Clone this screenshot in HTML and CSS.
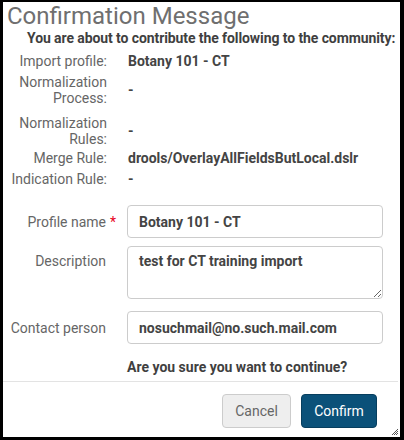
FILE: index.html
```html
<!DOCTYPE html>
<html>
<head>
<meta charset="utf-8">
<link rel="stylesheet" href="styles.css">
</head>
<body>
<div class="dialog">
  <h1 class="title">Confirmation Message</h1>
  <p class="intro">You are about to contribute the following to the community:</p>
  <div class="summary">
    <div class="row r1"><span class="lbl">Import profile:</span><span class="val">Botany 101 - CT</span></div>
    <div class="row r2"><span class="lbl">Normalization<br>Process:</span><span class="val">-</span></div>
    <div class="row r3"><span class="lbl">Normalization<br>Rules:</span><span class="val">-</span></div>
    <div class="row r4"><span class="lbl">Merge Rule:</span><span class="val">drools/OverlayAllFieldsButLocal.dslr</span></div>
    <div class="row r5"><span class="lbl">Indication Rule:</span><span class="val">-</span></div>
  </div>
  <div class="form">
    <div class="field f1">
      <label class="flabel">Profile name<span class="req">*</span></label>
      <input class="inp" type="text" value="Botany 101 - CT">
    </div>
    <div class="field f2">
      <label class="flabel top">Description</label>
      <textarea class="inp ta">test for CT training import</textarea>
    </div>
    <div class="field f3">
      <label class="flabel">Contact person</label>
      <input class="inp" type="text" value="nosuchmail@no.such.mail.com">
    </div>
  </div>
  <p class="question">Are you sure you want to continue?</p>
  <div class="footer">
    <button class="btn cancel">Cancel</button>
    <button class="btn primary">Confirm</button>
  </div>
  <svg class="grip" width="7" height="7" viewBox="0 0 7 7">
    <path d="M7 1 L1 7 M7 3 L3 7 M7 5 L5 7" stroke="#555" stroke-width="1" fill="none"/>
  </svg>
</div>
</body>
</html>
```

FILE: styles.css
```css
html, body {
  margin: 0;
  padding: 0;
  background: #000;
}
body {
  width: 404px;
  height: 440px;
  overflow: hidden;
  font-family: Roboto, "Liberation Sans", sans-serif;
}
.dialog {
  position: relative;
  width: 397px;
  height: 435px;
  margin: 2px 0 0 3px;
  background: #fff;
  display: flex;
  flex-direction: column;
}
.title {
  margin: 0;
  padding-left: 4px;
  font-size: 24px;
  line-height: 28px;
  font-weight: 400;
  color: #6f6f6f;
}
.intro {
  margin: 0;
  padding-left: 24px;
  font-size: 14px;
  line-height: 16px;
  font-weight: 700;
  letter-spacing: -0.09px;
  color: #3f3f3f;
  white-space: nowrap;
}
.summary {
  display: flex;
  flex-direction: column;
  margin-top: 7px;
}
.row {
  display: grid;
  grid-template-columns: 104px 1fr;
  column-gap: 21px;
  align-items: center;
  font-size: 14px;
  line-height: 16px;
}
.r2 { margin-top: 5px; }
.r3 { margin-top: 9px; }
.r4 { margin-top: 3px; }
.r5 { margin-top: 5px; }
.lbl {
  text-align: right;
  color: #666;
}
.val {
  font-weight: 700;
  color: #444;
  white-space: nowrap;
}
.form {
  display: flex;
  flex-direction: column;
  margin-top: 18px;
}
.field {
  display: grid;
  grid-template-columns: 103px 256px;
  column-gap: 21px;
  align-items: center;
}
.f2 { margin-top: 8px; align-items: start; }
.f3 { margin-top: 12px; }
.flabel {
  position: relative;
  text-align: right;
  font-size: 14px;
  line-height: 16px;
  color: #666;
}
.flabel.top { margin-top: 7px; }
.req {
  position: absolute;
  left: calc(100% + 4px);
  top: 0;
  color: #e8001c;
}
.inp {
  box-sizing: border-box;
  width: 256px;
  height: 33px;
  margin: 0;
  padding: 0 11px;
  border: 1px solid #cccccc;
  border-radius: 4px;
  font-family: Roboto, "Liberation Sans", sans-serif;
  font-size: 14px;
  font-weight: 700;
  color: #444;
  background: #fff;
  outline: none;
}
.ta {
  height: 53px;
  padding: 6px 11px;
  line-height: 16px;
  resize: both;
}
.question {
  margin: 15px 0 0 124px;
  font-size: 14px;
  line-height: 16px;
  font-weight: 700;
  color: #3f3f3f;
}
.footer {
  margin: 6px 2px 0 0;
  border-top: 1px solid #e3e3e3;
  padding: 12px 21px 0 0;
  display: flex;
  justify-content: flex-end;
  gap: 10px;
}
.btn {
  box-sizing: border-box;
  height: 34px;
  border-radius: 4px;
  font-family: Roboto, "Liberation Sans", sans-serif;
  font-size: 14px;
  font-weight: 400;
  cursor: pointer;
}
.cancel {
  width: 69px;
  background: #eeeeee;
  border: 1px solid #cccccc;
  color: #666;
}
.primary {
  width: 76px;
  background: #0b5179;
  border: 1px solid #073e5e;
  color: #fff;
}
.grip {
  position: absolute;
  right: 2px;
  bottom: 2px;
}
```
